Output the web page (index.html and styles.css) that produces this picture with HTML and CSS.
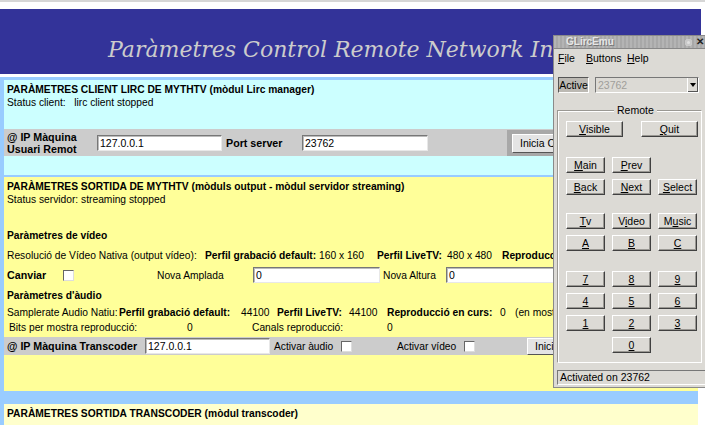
FILE: index.html
```html
<!DOCTYPE html>
<html>
<head>
<meta charset="utf-8">
<title>Paràmetres Control Remote Network</title>
<link rel="stylesheet" href="styles.css">
</head>
<body>
<div class="topbar"></div>
<div class="header"><h1 class="title">Paràmetres Control Remote Network Interface</h1></div>
<div class="main">
  <section class="panel cyan p1">
    <div class="ptitle">PARÀMETRES CLIENT LIRC DE MYTHTV (mòdul Lirc manager)</div>
    <div class="line">Status client:&nbsp;&nbsp; lirc client stopped</div>
    <div class="grayrow g1">
      <div class="lbl2">@ IP Màquina<br>Usuari Remot</div>
      <span class="input w125">127.0.0.1</span>
      <span class="blbl port">Port server</span>
      <span class="input w126">23762</span>
      <div class="btncell"><span class="pbtn">Inicia Client</span></div>
    </div>
  </section>

  <section class="panel yellow p2">
    <div class="ptitle">PARÀMETRES SORTIDA DE MYTHTV (mòduls output - mòdul servidor streaming)</div>
    <div class="line">Status servidor: streaming stopped</div>
    <div class="heading h-video">Paràmetres de vídeo</div>
    <div class="row r-res">
      <span class="c-res">Resolució de Vídeo Nativa (output vídeo):</span>
      <b class="c-pgd">Perfil grabació default:</b>
      <span class="c-v1">160 x 160</span>
      <b class="c-plt">Perfil LiveTV:</b>
      <span class="c-v2">480 x 480</span>
      <b class="c-rep">Reproducció en curs:</b>
    </div>
    <div class="row r-can">
      <b class="c-can">Canviar</b>
      <span class="chk c-chk"></span>
      <span class="c-na">Nova Amplada</span>
      <span class="input w127">0</span>
      <span class="c-nal">Nova Altura</span>
      <span class="input w127">0</span>
    </div>
    <div class="heading h-audio">Paràmetres d'àudio</div>
    <div class="row r-sr">
      <span class="c-sr">Samplerate Audio Natiu:</span>
      <b class="c-pgd2">Perfil grabació default:</b>
      <span class="c-a1">44100</span>
      <b class="c-plt2">Perfil LiveTV:</b>
      <span class="c-a2">44100</span>
      <b class="c-rep2">Reproducció en curs:</b>
      <span class="c-z">0</span>
      <span>(en mostres)</span>
    </div>
    <div class="row r-bits">
      <span class="c-bits">Bits per mostra reproducció:</span>
      <span class="c-b0">0</span>
      <span class="c-can2">Canals reproducció:</span>
      <span>0</span>
    </div>
    <div class="grayrow g2">
      <b class="c-ipt">@ IP Màquina Transcoder</b>
      <span class="input w125">127.0.0.1</span>
      <span class="c-aa">Activar àudio</span>
      <span class="chk"></span>
      <span class="c-av">Activar vídeo</span>
      <span class="chk"></span>
      <span class="pbtn b2">Inicia Transcoder</span>
    </div>
  </section>

  <section class="panel lyellow p3">
    <div class="ptitle">PARÀMETRES SORTIDA TRANSCODER (mòdul transcoder)</div>
  </section>
</div>

<div class="win">
  <div class="wtitle">
    <span class="wname">GLircEmu</span>
    <span class="wdot"></span>
    <span class="wx">✕</span>
  </div>
  <div class="menubar">
    <span class="m-file"><u>F</u>ile</span>
    <span class="m-buttons"><u>B</u>uttons</span>
    <span><u>H</u>elp</span>
  </div>
  <div class="activerow">
    <span class="toggle">Active</span>
    <span class="combo"><span class="ctext">23762</span><span class="carrow"></span></span>
  </div>
  <div class="group">
    <span class="glabel">Remote</span>
    <div class="brow two"><span class="wbtn wide"><u>V</u>isible</span><span class="wbtn wide"><u>Q</u>uit</span></div>
    <div class="brow grid m-main"><span class="wbtn"><u>M</u>ain</span><span class="wbtn"><u>P</u>rev</span></div>
    <div class="brow grid"><span class="wbtn"><u>B</u>ack</span><span class="wbtn"><u>N</u>ext</span><span class="wbtn"><u>S</u>elect</span></div>
    <div class="brow grid m-tv"><span class="wbtn"><u>T</u>v</span><span class="wbtn">V<u>i</u>deo</span><span class="wbtn">M<u>u</u>sic</span></div>
    <div class="brow grid"><span class="wbtn"><u>A</u></span><span class="wbtn"><u>B</u></span><span class="wbtn"><u>C</u></span></div>
    <div class="brow grid m-num"><span class="wbtn"><u>7</u></span><span class="wbtn"><u>8</u></span><span class="wbtn"><u>9</u></span></div>
    <div class="brow grid"><span class="wbtn"><u>4</u></span><span class="wbtn"><u>5</u></span><span class="wbtn"><u>6</u></span></div>
    <div class="brow grid"><span class="wbtn"><u>1</u></span><span class="wbtn"><u>2</u></span><span class="wbtn"><u>3</u></span></div>
    <div class="brow grid"><span class="wbtn col2"><u>0</u></span></div>
  </div>
  <div class="status">Activated on 23762</div>
</div>
</body>
</html>
```
FILE: styles.css
```css
* { box-sizing: border-box; }
html, body { margin: 0; padding: 0; }
body {
  width: 705px; height: 425px; overflow: hidden; position: relative;
  background: #fff; color: #000;
  font-family: "Liberation Sans", Arial, sans-serif; font-size: 10.25px;
}
.topbar { height: 9px; border-top: 2px solid #d6d6d6; background: #fff; }
.header { width: 701px; height: 65px; background: #333399; padding: 28px 0 0 108px; overflow: hidden; }
.title {
  margin: 0; font-family: "DejaVu Serif", serif; font-style: italic; font-weight: normal;
  font-size: 22px; line-height: 26px; color: #cccccc; white-space: nowrap;
}
.main { width: 698px; height: 351px; border-top: 3px solid #fff; background: #99ccff; padding: 3px 0 0 4px; }
.panel { width: 694px; overflow: hidden; }
.cyan { background: #ccffff; }
.yellow { background: #ffff99; }
.lyellow { background: #ffffcc; }
.p1 { height: 95px; margin-bottom: 2px; }
.p2 { height: 214px; margin-bottom: 13px; }
.p3 { height: 40px; }
.ptitle { font-weight: bold; padding: 3px 0 0 3px; line-height: 13px; white-space: nowrap; }
.line { padding-left: 3px; line-height: 14px; white-space: nowrap; }
.heading { font-weight: bold; padding-left: 3px; line-height: 14px; }
.h-video { margin-top: 22px; }
.h-audio { margin-top: 6px; }
.row { display: flex; align-items: center; padding-left: 3px; white-space: nowrap; height: 14px; }
.row > * { flex: none; }
.r-res { margin-top: 5px; }
.r-can { margin-top: 5px; height: 16px; }
.r-sr { margin-top: 2px; }
.r-bits { margin-top: 1px; padding-left: 5px; }

.grayrow { background: #cccccc; display: flex; align-items: center; white-space: nowrap; }
.grayrow > * { flex: none; }
.g1 { margin-top: 19px; height: 27px; }
.g2 { margin-top: 3px; height: 18px; }
.lbl2 { font-weight: bold; font-size: 10.7px; line-height: 12px; padding-left: 3px; width: 93px; }
.blbl { font-weight: bold; font-size: 10.7px; }
.port { width: 80px; padding-left: 4px; }
.input {
  display: inline-block; height: 16px; background: #fff; line-height: 14px; padding-left: 2px;
  border: 1px solid; border-color: #777 #e8e8e8 #e8e8e8 #777; box-shadow: inset 1px 1px 0 #bbb;
  font-size: 10.5px; color: #000; overflow: hidden;
}
.w125 { width: 125px; }
.w126 { width: 126px; }
.w127 { width: 127px; }
.btncell { margin-left: 79px; background: #a8a8a8; height: 26px; flex: 1 !important; padding: 4px 0 0 5px; }
.pbtn {
  display: inline-block; height: 19px; line-height: 17px; padding: 0 7px; background: #e4e4e4;
  border: 1px solid; border-color: #fff #555 #555 #fff; font-size: 10.5px;
}
.b2 { margin-left: 52px; height: 17px; line-height: 15px; }

.c-res { width: 198px; }
.c-pgd { width: 114px; }
.c-v1 { width: 58px; }
.c-plt { width: 70px; }
.c-v2 { width: 55px; }
.c-can { width: 56px; font-size: 10.7px; }
.chk {
  display: inline-block; width: 11px; height: 11px; background: #fff;
  border: 1px solid; border-color: #666 #ddd #ddd #666;
}
.c-chk { margin-right: 83px; }
.c-na { width: 96px; }
.c-nal { width: 66px; padding-left: 3px; }
.c-sr { width: 112px; }
.c-pgd2 { width: 122px; }
.c-a1 { width: 36px; }
.c-plt2 { width: 72px; }
.c-a2 { width: 38px; }
.c-rep2 { width: 113px; }
.c-z { width: 15px; }
.c-bits { width: 178px; }
.c-b0 { width: 65px; }
.c-can2 { width: 135px; }
.c-ipt { width: 141px; padding-left: 3px; font-size: 10.7px; }
.c-aa { padding-left: 4px; width: 71px; }
.c-av { margin-left: 45px; width: 67px; }

/* GLircEmu window */
.win {
  position: absolute; left: 553px; top: 35px; width: 156px; height: 353px;
  background: #dcdad5; border: 1px solid #8a8a8a; font-family: "Liberation Sans", Arial, sans-serif; font-size: 10px;
}
.wtitle {
  height: 13px; position: relative;
  background: repeating-linear-gradient(90deg, #b4b4b4 0 2px, #a8a8a8 2px 4px);
  border-bottom: 1px solid #888;
}
.wname { position: absolute; left: 12px; top: 0; font-weight: bold; font-size: 10px; line-height: 12px; color: #e6e6e6; text-shadow: 1px 1px 0 #777; }
.wdot { position: absolute; left: 131px; top: 3px; width: 7px; height: 7px; border-radius: 50%; background: #e0e0e0; box-shadow: inset 0 0 0 2px #c8c8c8; }
.wx { position: absolute; left: 142px; top: 0; font-size: 10px; line-height: 12px; font-weight: bold; color: #222; }
.menubar { height: 18px; display: flex; padding: 3px 0 0 4px; font-size: 10.5px; line-height: 13px; }
.m-file { width: 28px; }
.m-buttons { width: 41px; }
.activerow { display: flex; align-items: center; padding: 10px 0 0 4px; }
.toggle {
  width: 31px; height: 16px; line-height: 14px; text-align: center; background: #bcb9b3;
  border: 1px solid; border-color: #555 #fff #fff #555; font-size: 10.5px;
}
.combo {
  margin-left: 6px; width: 104px; height: 16px; display: flex; background: #dcdad5;
  border: 1px solid; border-color: #777 #fff #fff #777;
}
.ctext { flex: 1; color: #a09e9a; line-height: 14px; padding-left: 2px; font-size: 10.5px; }
.carrow {
  width: 11px; border-left: 1px solid #fff; box-shadow: inset -1px -1px 0 #555;
  position: relative;
}
.carrow::after {
  content: ""; position: absolute; left: 2px; top: 5px;
  border-left: 3px solid transparent; border-right: 3px solid transparent; border-top: 4px solid #000;
}
.group {
  margin: 17px 0 0 3px; width: 145px; height: 253px; position: relative;
  border: 1px solid; border-color: #9a9893 #fff #fff #9a9893; box-shadow: 1px 1px 0 #fff inset;
  padding: 10px 0 0 8px;
}
.glabel { position: absolute; left: 56px; top: -7px; background: #dcdad5; padding: 0 3px; font-size: 10.5px; line-height: 12px; }
.brow { display: flex; height: 16px; }
.brow + .brow { margin-top: 6px; }
.brow.two { gap: 18px; }
.brow.grid { display: grid; grid-template-columns: 39px 39px 39px; column-gap: 7px; }
.brow.m-main { margin-top: 20px; }
.brow.m-tv { margin-top: 18px; }
.brow.m-num { margin-top: 20px; }
.wbtn {
  height: 16px; line-height: 14px; text-align: center; background: #dcdad5; font-size: 10.5px;
  border: 1px solid; border-color: #fff #404040 #404040 #fff; box-shadow: inset -1px -1px 0 #9a9893;
}
.wbtn.wide { width: 57px; }
.wbtn.col2 { grid-column: 2; }
.status {
  margin: 7px 0 0 3px; width: 150px; height: 15px; line-height: 13px; padding-left: 2px;
  border: 1px solid; border-color: #777 #fff #fff #777; font-size: 10.5px;
}
```
